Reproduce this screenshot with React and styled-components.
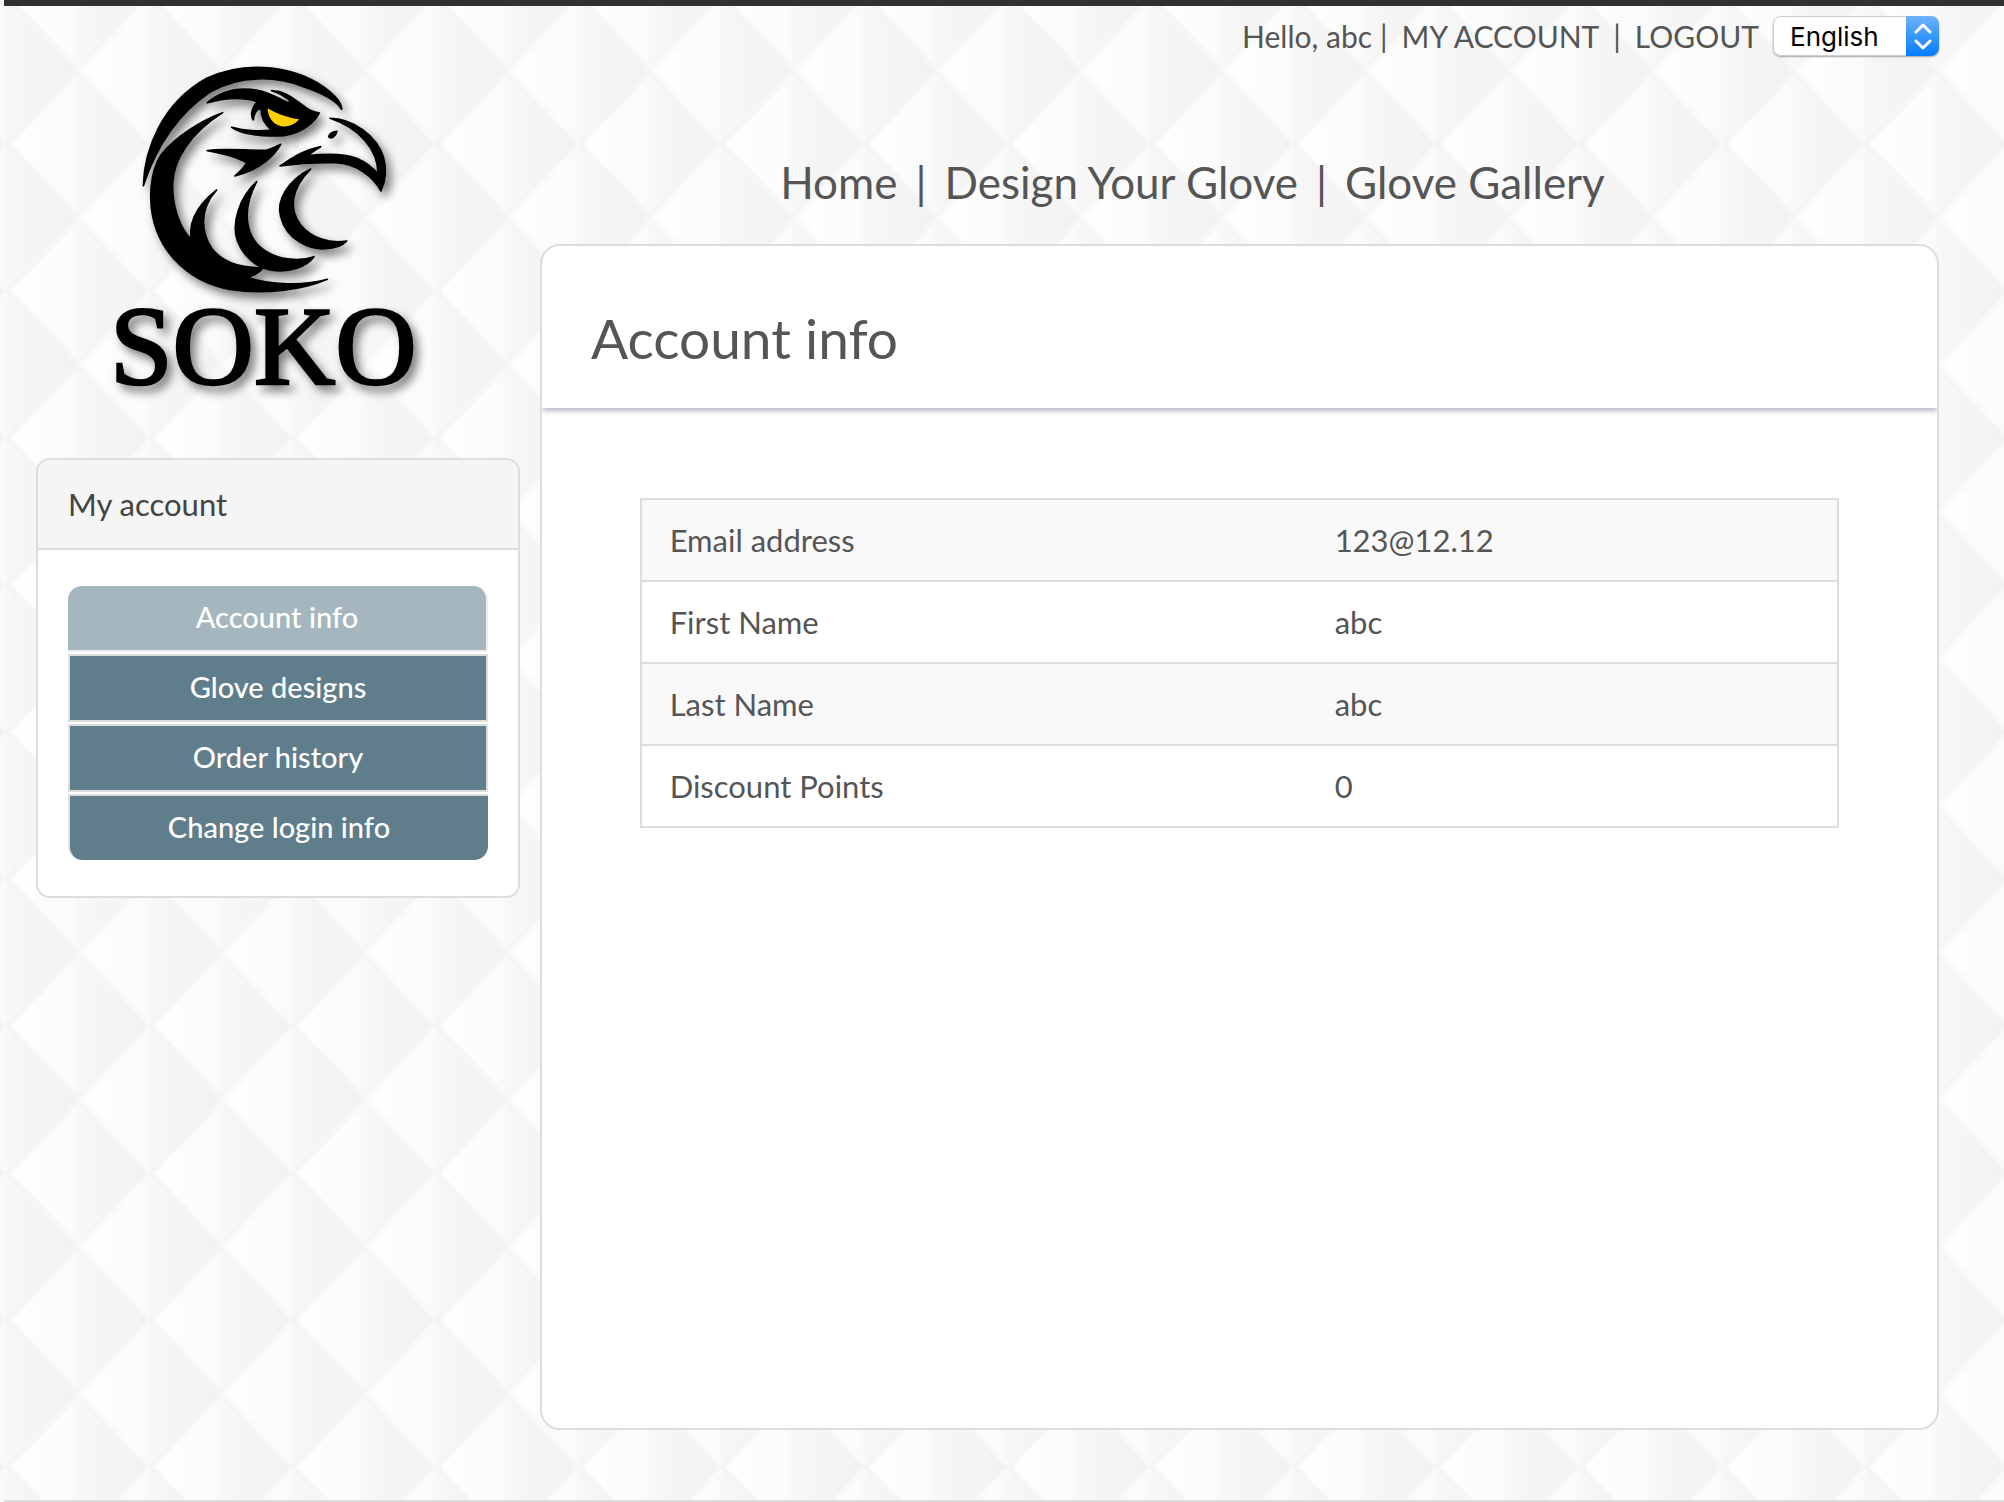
import React from "react";
import styled, { createGlobalStyle } from "styled-components";

const tile = encodeURIComponent(`<svg xmlns="http://www.w3.org/2000/svg" width="143" height="147" viewBox="0 0 143 147">
<defs>
<linearGradient id="g"><stop offset="0" stop-color="#fff"/><stop offset=".18" stop-color="#fefefe"/><stop offset=".22" stop-color="#fcfcfc"/><stop offset=".46" stop-color="#fbfbfb"/><stop offset=".5" stop-color="#f8f8f8"/><stop offset=".6" stop-color="#f6f6f6"/><stop offset=".66" stop-color="#f5f5f5"/><stop offset=".86" stop-color="#f4f4f4"/><stop offset="1" stop-color="#f1f1f2"/></linearGradient>
<g id="d"><path d="M0 73.5L71.5 0L143 73.5L71.5 147Z" fill="url(#g)"/><path d="M71.5 0L143 73.5L71.5 147" fill="none" stroke="#f5f5f5" stroke-width="5"/><path d="M71.5 3L3 73.5L71.5 144" fill="none" stroke="#fafafa" stroke-width="4"/></g>
</defs>
<use href="#d" x="-71.5" y="-73.5"/><use href="#d" x="71.5" y="-73.5"/><use href="#d" x="-71.5" y="73.5"/><use href="#d" x="71.5" y="73.5"/><use href="#d"/>
</svg>`);

const GlobalStyle = createGlobalStyle`
  *, *::before, *::after { box-sizing: border-box; }
  body {
    margin: 0;
    background: #fafafa url("data:image/svg+xml,${tile}") 78px -3px;
    color: #555;
    font-family: Lato, "Open Sans", sans-serif;
    font-size: 31px;
    line-height: 40px;
  }
  a { color: inherit; text-decoration: none; }
`;

const Page = styled.div`
  display: flex;
  flex-direction: column;
  min-height: 100vh;
  margin-left: 4px;
  border-top: 6px solid #333031;
`;

const Columns = styled.div`
  flex: 1;
  display: grid;
  grid-template-columns: 484px minmax(0, 1fr);
  gap: 20px;
  padding: 10px 65px 70px 32px;
`;

const Sidebar = styled.aside`
  display: flex;
  flex-direction: column;
`;

const LogoLink = styled.a`
  align-self: flex-start;
  margin: 24px 0 48px 54px;
  svg {
    display: block;
    overflow: visible;
    filter: drop-shadow(5px 6px 5px rgba(0, 0, 0, 0.5));
  }
`;

const Card = styled.section`
  background: #fff;
  border: 2px solid #ddd;
  border-radius: ${(p) => (p.$large ? 20 : 14)}px;
`;

const CardTitle = styled.h2`
  margin: 0;
  padding: 24px 30px;
  border-bottom: 2px solid #ddd;
  border-radius: 12px 12px 0 0;
  background: #f5f5f5;
  color: #444;
  font-size: 31px;
  font-weight: 400;
  line-height: 40px;
`;

const Menu = styled.nav`
  display: flex;
  flex-direction: column;
  gap: 2px;
  padding: 36px 30px;
`;

const MenuLink = styled.a`
  padding: 11px 0 13px;
  border: 2px solid #ddd;
  background: #607d8b;
  color: #fff;
  font-size: 29px;
  font-weight: 500;
  text-align: center;

  &:first-child {
    border-top: 0;
    border-radius: 14px 14px 0 0;
  }
  &:last-child {
    border-right: 0;
    border-bottom: 0;
    border-radius: 0 0 14px 14px;
  }
  &[aria-current] {
    border-color: #eee;
    border-left: 0;
    background: #a6b6be;
  }
`;

const Main = styled.div`
  display: flex;
  flex-direction: column;
  min-width: 0;
`;

const UserBar = styled.div`
  display: flex;
  align-items: center;
  justify-content: flex-end;
  gap: 14px;
  font-size: 30px;
  line-height: 38px;
`;

const Greeting = styled.span`
  margin-right: -6px;
`;

const Picker = styled.label`
  display: flex;
  position: relative;
  width: 166px;
  height: 40px;
  border-radius: 8px;
  box-shadow: 0 1px 2px rgba(0, 0, 0, 0.35);
  overflow: hidden;
`;

const Select = styled.select`
  flex: 1;
  appearance: none;
  padding: 0 16px;
  border: 1px solid #ccc;
  border-radius: 8px;
  background: #fff;
  color: #000;
  font-family: Inter, "Liberation Sans", sans-serif;
  font-size: 26px;
`;

const Stepper = styled.span`
  position: absolute;
  top: 0;
  right: 0;
  bottom: 0;
  display: grid;
  place-items: center;
  width: 33px;
  background: linear-gradient(#6cb3fa, #057cff);
  pointer-events: none;
`;

const MainNav = styled.nav`
  display: flex;
  justify-content: center;
  gap: 18px;
  margin: 98px 0 34px;
  padding-right: 94px;
  font-size: 44px;
  line-height: 56px;
`;

const Content = styled(Card)`
  flex: 1;
  overflow: hidden;
`;

const PageTitle = styled.h1`
  margin: 0;
  padding: 58px 49px 36px;
  box-shadow: 0 3px 5px #b9b9c8;
  font-size: 55px;
  font-weight: 400;
  line-height: 68px;
`;

const TableArea = styled.div`
  padding: 90px 7%;
`;

const Table = styled.table`
  width: 100%;
  border-collapse: collapse;
  table-layout: fixed;

  tr {
    border: 2px solid #ddd;
  }
  tr:nth-child(odd) {
    background: #f9f9f9;
  }
  th, td {
    padding: 20px 28px;
    font-weight: 400;
    text-align: left;
  }
  th {
    width: 666px;
  }
`;

const Footer = styled.footer`
  border-top: 2px solid #ddd;
`;

function Logo() {
  return (
    <svg width="350" height="370" viewBox="0 0 1050 1110" role="img" aria-label="Soko">
      <g stroke="#000" strokeWidth="5" strokeLinejoin="round">
        <path d="M160 437C163 330 215 190 350 115C480 55 620 85 700 140C735 165 755 190 755 208C740 182 700 160 640 140C560 108 450 104 360 156C262 222 197 325 160 437Z" />
        <path d="M398 218C340 238 255 290 213 345C178 400 178 480 188 530C213 650 310 730 420 748C520 765 640 750 712 718C640 738 540 735 470 712C490 708 510 695 520 683C450 685 395 665 365 625C335 580 325 510 380 450C310 505 295 560 305 600C265 560 246 490 248 430C250 360 300 280 398 218Z" />
        <path d="M500 425C450 470 422 550 443 605C463 652 500 682 540 690C600 700 650 680 672 650C630 665 570 660 530 635C470 600 450 520 500 425Z" />
        <path d="M662 387C595 420 558 480 572 530C590 600 660 630 705 626C735 625 760 615 770 603C720 612 665 595 632 555C597 510 600 450 662 387Z" />
        <path d="M352 332C400 322 500 335 530 330C550 325 560 318 572 313C555 345 510 390 435 408C450 395 465 380 470 368C440 350 395 340 352 332Z" />
        <path d="M720 235C790 235 860 290 880 350C892 390 885 425 873 453C850 410 800 370 735 368C680 367 625 370 570 378C600 360 625 335 692 320C675 330 660 340 655 347C700 342 760 340 800 355C830 368 850 385 864 402C865 330 810 265 720 235Z" />
        <path d="M716 290C718 280 730 274 741 274C738 288 722 301 716 290Z" />
        <path d="M352 188C400 147 450 142 500 150C530 154 560 172 590 186L605 188C590 172 570 160 545 152C590 154 610 177 640 197C655 210 672 217 688 219C670 255 620 288 560 288C500 288 450 280 425 262C460 272 510 275 545 270C525 255 513 230 513 205C500 205 490 225 490 240C482 230 482 205 503 185C460 170 410 172 352 188Z" />
      </g>
      <path fill="#ffd000" d="M533 205C560 222 600 235 627 238C610 262 570 267 550 247C538 234 533 220 533 205Z" />
      <text x="520" y="1031" textAnchor="middle" fontFamily="'Liberation Serif', serif" fontSize="338" stroke="#000" strokeWidth="8">
        SOKO
      </text>
    </svg>
  );
}

const menu = ["Account info", "Glove designs", "Order history", "Change login info"];

const details = [
  ["Email address", "123@12.12"],
  ["First Name", "abc"],
  ["Last Name", "abc"],
  ["Discount Points", "0"],
];

export default function App() {
  return (
    <>
      <GlobalStyle />
      <Page>
        <Columns>
          <Sidebar>
            <LogoLink href="#home">
              <Logo />
            </LogoLink>
            <Card>
              <CardTitle>My account</CardTitle>
              <Menu>
                {menu.map((item, i) => (
                  <MenuLink key={item} href="#account" aria-current={i === 0 ? "page" : undefined}>
                    {item}
                  </MenuLink>
                ))}
              </Menu>
            </Card>
          </Sidebar>
          <Main>
            <UserBar>
              <Greeting>Hello, abc</Greeting>
              <span>|</span>
              <a href="#account">MY ACCOUNT</a>
              <span>|</span>
              <a href="#logout">LOGOUT</a>
              <Picker>
                <Select aria-label="Language" defaultValue="English">
                  <option>English</option>
                </Select>
                <Stepper>
                  <svg width="18" height="30" viewBox="0 0 18 30" fill="none" stroke="#fff" strokeWidth="3" strokeLinecap="round" strokeLinejoin="round">
                    <path d="M2 11L9 4L16 11M2 20L9 27L16 20" />
                  </svg>
                </Stepper>
              </Picker>
            </UserBar>
            <MainNav>
              <a href="#home">Home</a>
              <span>|</span>
              <a href="#design">Design Your Glove</a>
              <span>|</span>
              <a href="#gallery">Glove Gallery</a>
            </MainNav>
            <Content $large>
              <PageTitle>Account info</PageTitle>
              <TableArea>
                <Table>
                  <tbody>
                    {details.map(([name, value]) => (
                      <tr key={name}>
                        <th scope="row">{name}</th>
                        <td>{value}</td>
                      </tr>
                    ))}
                  </tbody>
                </Table>
              </TableArea>
            </Content>
          </Main>
        </Columns>
        <Footer />
      </Page>
    </>
  );
}
